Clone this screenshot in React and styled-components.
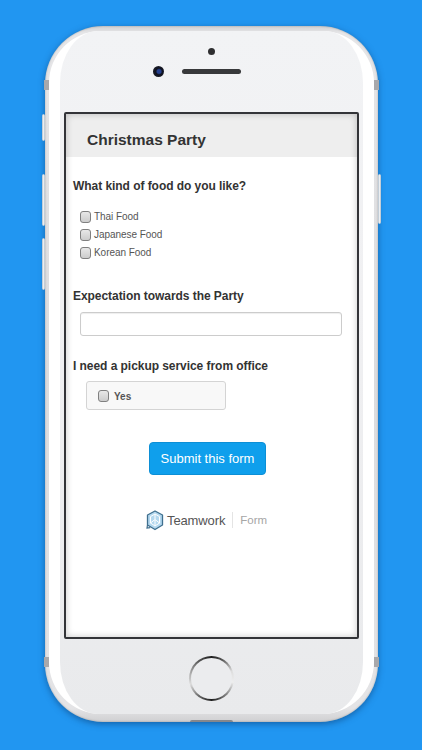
import React from "react";
import styled, { createGlobalStyle } from "styled-components";

const Global = createGlobalStyle`
  html, body { margin: 0; padding: 0; height: 750px; overflow: hidden; background: #2196f1; }
  * { box-sizing: border-box; }
`;
const Page = styled.div`
  width: 422px; height: 750px; padding: 26px 44px 28px 45px; background: #2196f1;
  font-family: "Liberation Sans", Arial, sans-serif;
`;
const Phone = styled.div`
  position: relative; width: 333px; height: 696px; border-radius: 58px;
  padding: 5px 4px 8px;
  background: linear-gradient(180deg, #d2d2d4 0%, #e6e6e8 1%, #dcdcde 50%, #e4e4e6 98%, #cfcfd1 100%);
  box-shadow: 0 2px 6px rgba(10, 50, 100, .5), inset 0 0 2px rgba(0,0,0,.3);
`;
const Band = styled.div`
  position: absolute; left: ${p => p.$side === "l" ? "-1px" : "auto"}; right: ${p => p.$side === "r" ? "-1px" : "auto"};
  top: ${p => p.$top}px; width: 5px; height: 10px; background: #a8a8ab;
`;
const SideKey = styled.div`
  position: absolute; top: ${p => p.$top}px; height: ${p => p.$h}px; width: 3px;
  left: ${p => p.$side === "l" ? "-3px" : "auto"}; right: ${p => p.$side === "r" ? "-3px" : "auto"};
  background: #eceef0; border: 1px solid #c3ced8; border-radius: 2px;
`;
const Nub = styled.div`
  position: absolute; left: 145px; bottom: 0; width: 43px; height: 2px; background: #85878c; border-radius: 2px 2px 0 0;
`;
const Rim = styled.div`
  height: 100%; border-radius: 52px; background: #fff; padding: 0 11px;
  display: flex;
`;
const Face = styled.div`
  flex: 1; border-radius: 38px / 52px; display: flex; flex-direction: column;
  background: linear-gradient(180deg, #f2f3f5 0%, #f0f0f2 40%, #e9eaec 100%);
  align-items: center;
`;
const TopBezel = styled.div`
  height: 81px; width: 100%; flex: none; display: flex; flex-direction: column; align-items: center; padding-top: 17px;
`;
const Mic = styled.div`
  width: 7px; height: 7px; border-radius: 50%; background: #2e2e30;
`;
const CamRow = styled.div`
  margin-top: 11px; display: flex; align-items: center; gap: 18px; margin-left: -29px;
`;
const Camera = styled.div`
  width: 11px; height: 11px; border-radius: 50%; background: radial-gradient(circle at 55% 50%, #25408f 0 22%, #10121f 40%, #24262e 100%);
`;
const Speaker = styled.div`
  width: 59px; height: 5px; border-radius: 3px; background: #38393b;
`;
const Screen = styled.div`
  position: relative; width: 295px; height: 527px; flex: none; background: #fff; border: 2px solid #333438; border-radius: 2px;
  display: flex; flex-direction: column; color: #333;
  &::after {
    content: ""; position: absolute; inset: 0; pointer-events: none;
    box-shadow: inset 0 0 7px rgba(0,0,0,.22);
  }
`;
const Header = styled.div`
  height: 43px; flex: none; background: #eeeeee; display: flex; align-items: center; padding: 8px 0 0 21px;
  font-size: 15.5px; font-weight: 700; color: #333;
`;
const Body = styled.div`
  padding: 22px 7px 0; display: flex; flex-direction: column; flex: 1;
`;
const Question = styled.div`
  font-size: 12px; font-weight: 700; line-height: 15px; color: #333; letter-spacing: -.05px;
  margin-top: ${p => p.$mt || 0}px;
`;
const Options = styled.div`
  display: flex; flex-direction: column; gap: 3px; margin: 15px 0 0 7px;
`;
const Option = styled.label`
  display: flex; align-items: center; gap: 3px; height: 15px; font-size: 10px; color: #555; letter-spacing: -.05px;
`;
const Check = styled.input.attrs({ type: "checkbox" })`
  appearance: none; margin: ${p => p.$mt ?? 1}px 0 0; width: 11px; height: 12px; flex: none; border-radius: 3px;
  border: 1px solid #808080; background: linear-gradient(180deg, #e8e8e8, #cccccc);
`;
const Field = styled.input`
  display: block; width: 262px; height: 24px; margin: 8px 0 0 7px; border: 1px solid #ccc; border-radius: 3px;
  background: #fff; box-shadow: inset 0 1px 1px rgba(0,0,0,.07); padding: 0;
`;
const YesBox = styled.label`
  display: flex; align-items: center; gap: 5px; width: 140px; height: 29px; margin: 7px 0 0 13px; padding: 1px 0 0 11px;
  background: #f8f8f8; border: 1px solid #d4d4d4; border-radius: 3px; font-size: 10px; font-weight: 700; color: #555;
`;
const Submit = styled.button`
  display: block; width: 117px; height: 33px; margin: 32px 0 0 76px; padding: 0; border: 1px solid #0c8fd6; border-radius: 4px;
  background: #0f9fec; color: #fff; font-family: inherit; font-size: 13px;
`;
const Brand = styled.div`
  display: flex; align-items: center; height: 22px; margin: 34px 0 0 73px; font-size: 13px; color: #555;
`;
const Wordmark = styled.span`
  margin-left: 3px; letter-spacing: -.12px;
`;
const Divider = styled.span`
  width: 1px; height: 16px; background: #e4e4e4; margin: 0 7px;
`;
const Product = styled.span`
  color: #a6a6a6; font-size: 11.5px;
`;
const HomeBezel = styled.div`
  flex: 1; display: flex; align-items: flex-start; justify-content: center; padding-top: 17px;
`;
const Home = styled.div`
  width: 45px; height: 45px; border-radius: 50%; padding: 2px;
  background: conic-gradient(from 0deg, #1e1e1e 0deg, #555 30deg, #ddd 70deg, #eee 100deg, #888 135deg, #1e1e1e 180deg, #666 215deg, #ddd 255deg, #aaa 285deg, #555 325deg, #1e1e1e 360deg);
  &::before { content: ""; display: block; width: 100%; height: 100%; border-radius: 50%; background: #ebecee; }
`;

function Logo() {
  return (
    <svg width="18" height="21" viewBox="0 0 18 21" aria-hidden="true">
      <path d="M9 1 L16.5 5 V15 L9 19.5 L1.5 15 V5 Z" fill="#b4d8ef" stroke="#3f6f8e" strokeWidth="1.3" strokeLinejoin="round" />
      <path d="M1.5 15 L1 18 L4.2 17.6" fill="none" stroke="#3f6f8e" strokeWidth="1.2" />
      <path d="M9 4 L13.5 6.6 V13 L9 16 L4.5 13 V6.6 Z M9 4 V9 M4.5 13 L9 9.5 L13.5 13 M9 9.5 V16" fill="none" stroke="#fff" strokeWidth="1" />
    </svg>
  );
}

export default function App() {
  return (
    <Page>
      <Global />
      <Phone>
        <Band $side="l" $top={54} /><Band $side="r" $top={54} />
        <Band $side="l" $top={631} /><Band $side="r" $top={631} />
        <SideKey $side="l" $top={88} $h={27} />
        <SideKey $side="l" $top={148} $h={52} />
        <SideKey $side="l" $top={212} $h={52} />
        <SideKey $side="r" $top={148} $h={50} />
        <Nub />
        <Rim>
          <Face>
            <TopBezel>
              <Mic />
              <CamRow><Camera /><Speaker /></CamRow>
            </TopBezel>
            <Screen>
              <Header>Christmas Party</Header>
              <Body>
                <Question>What kind of food do you like?</Question>
                <Options>
                  <Option><Check />Thai Food</Option>
                  <Option><Check />Japanese Food</Option>
                  <Option><Check />Korean Food</Option>
                </Options>
                <Question $mt={29}>Expectation towards the Party</Question>
                <Field aria-label="Expectation towards the Party" />
                <Question $mt={23}>I need a pickup service from office</Question>
                <YesBox><Check $mt={0} />Yes</YesBox>
                <Submit>Submit this form</Submit>
                <Brand>
                  <Logo />
                  <Wordmark>Teamwork</Wordmark>
                  <Divider />
                  <Product>Form</Product>
                </Brand>
              </Body>
            </Screen>
            <HomeBezel><Home /></HomeBezel>
          </Face>
        </Rim>
      </Phone>
    </Page>
  );
}
